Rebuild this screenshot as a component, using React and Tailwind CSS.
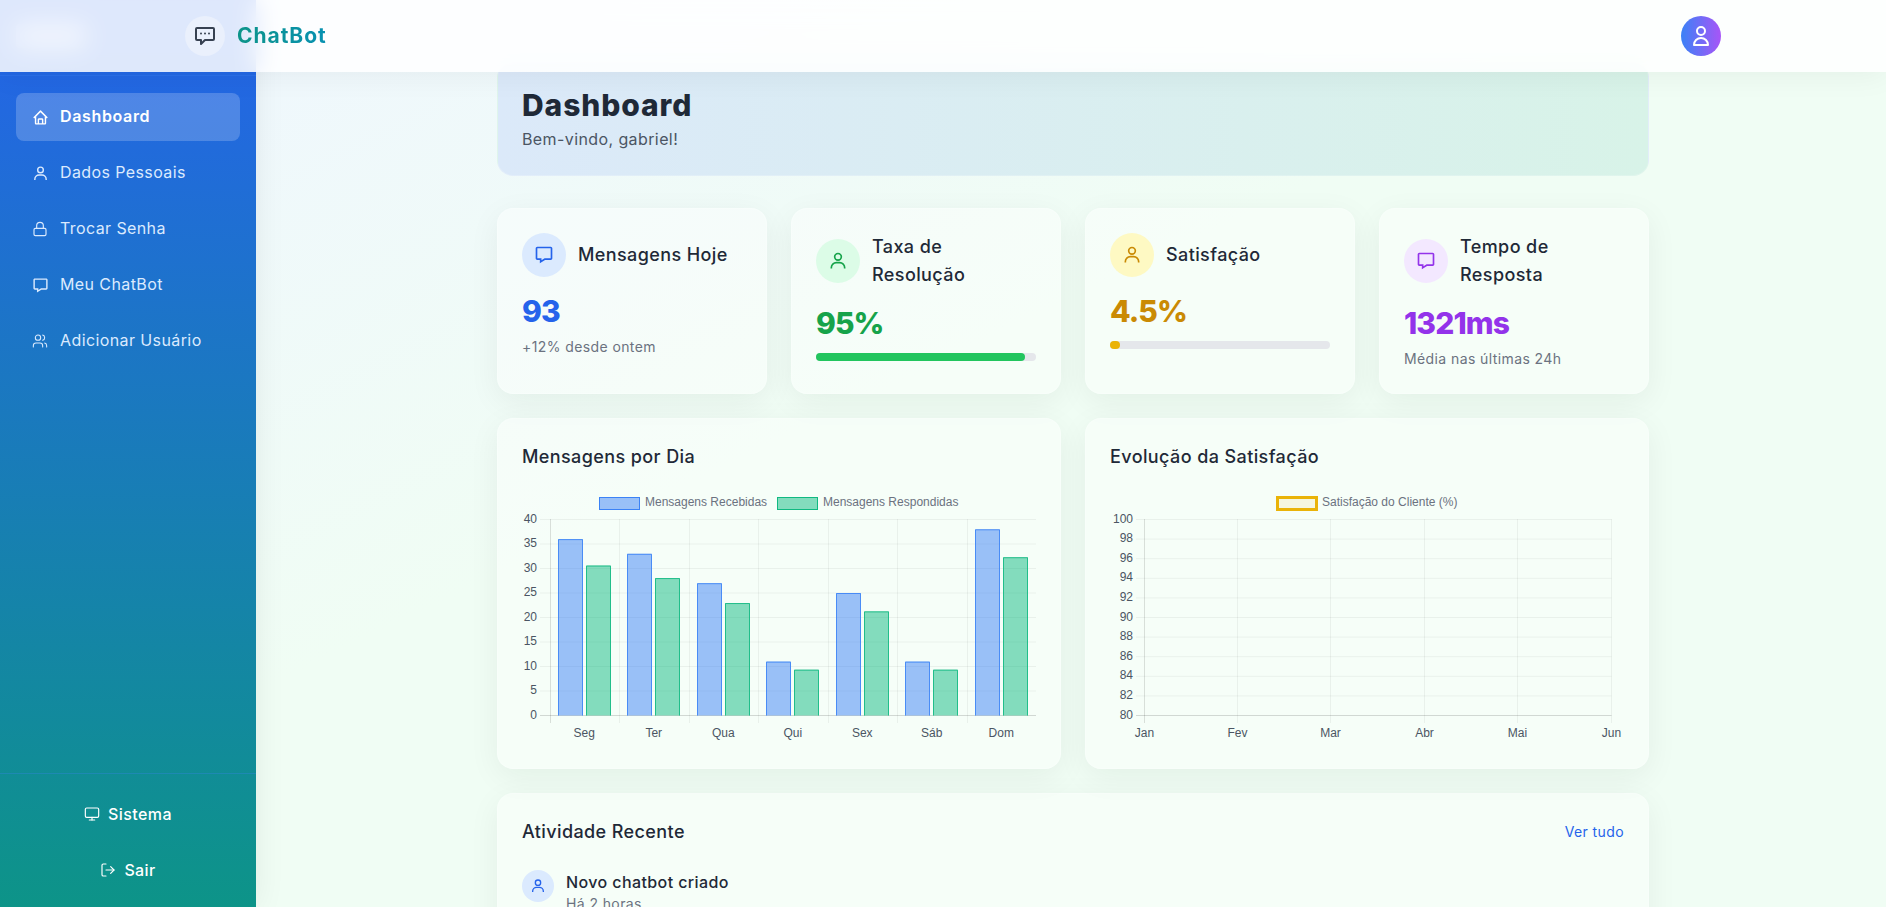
import React from 'react';
import { BiHome, BiUser, BiMessage } from 'react-icons/bi';
import { HiOutlineUser } from 'react-icons/hi';
import { Lock, Users, Monitor, LogOut } from 'lucide-react';

const LockIcon = ({ size }) => <Lock size={size - 1} strokeWidth={1.75} />;
const UsersIcon = ({ size }) => <Users size={size + 1} strokeWidth={1.6} />;

const navItems = [
  { label: 'Dashboard', icon: BiHome, active: true },
  { label: 'Dados Pessoais', icon: BiUser },
  { label: 'Trocar Senha', icon: LockIcon },
  { label: 'Meu ChatBot', icon: BiMessage },
  { label: 'Adicionar Usuário', icon: UsersIcon },
];

const days = ['Seg', 'Ter', 'Qua', 'Qui', 'Sex', 'Sáb', 'Dom'];
const received = [36, 33, 27, 11, 25, 11, 38];
const answered = [30.6, 28.05, 22.95, 9.35, 21.25, 9.35, 32.3];
const months = ['Jan', 'Fev', 'Mar', 'Abr', 'Mai', 'Jun'];

const Bar = ({ x, value, fill, stroke }) => {
  const top = 228.5 - value * 4.9;
  return (
    <g>
      <rect x={x} y={top} width={25} height={228.5 - top} fill={fill} />
      <path d={`M${x + 0.5} 228.5V${top + 0.5}H${x + 24.5}V228.5`} fill="none" stroke={stroke} strokeOpacity="0.85" />
    </g>
  );
};

const BarChart = () => {
  const left = 27.5;
  const step = 69.5;
  return (
    <svg width="514" height="257" className="block tracking-normal font-['Liberation_Sans',sans-serif]" fontSize="12" fill="#4b5563">
      <rect x="77.5" y="10.5" width="40" height="12" fill="rgba(59,130,246,0.5)" stroke="#3b82f6" />
      <text x="123" y="19" fill="#6b7280">Mensagens Recebidas</text>
      <rect x="255.5" y="10.5" width="40" height="12" fill="rgba(16,185,129,0.5)" stroke="#10b981" />
      <text x="301" y="19" fill="#6b7280">Mensagens Respondidas</text>
      {[0, 5, 10, 15, 20, 25, 30, 35, 40].map((v) => {
        const y = 228.5 - v * 4.9;
        return (
          <g key={v}>
            <line x1="18" x2="514" y1={y} y2={y} stroke={v === 0 ? 'rgba(0,0,0,0.15)' : 'rgba(0,0,0,0.05)'} />
            <text x="15" y={y + 3} textAnchor="end">{v}</text>
          </g>
        );
      })}
      {[0, 1, 2, 3, 4, 5, 6, 7].map((i) => {
        const x = Math.round(left + i * step) + 0.5;
        return <line key={i} x1={x} x2={x} y1="32" y2="236" stroke={i === 0 ? 'rgba(0,0,0,0.12)' : 'rgba(0,0,0,0.05)'} />;
      })}
      {days.map((d, i) => {
        const c = left + step * i + step / 2;
        return (
          <g key={d}>
            <Bar x={Math.round(c - 26.4)} value={received[i]} fill="rgba(59,130,246,0.5)" stroke="#3b82f6" />
            <Bar x={Math.round(c + 1.4)} value={answered[i]} fill="rgba(16,185,129,0.5)" stroke="#10b981" />
            <text x={c} y="250" textAnchor="middle">{d}</text>
          </g>
        );
      })}
    </svg>
  );
};

const LineChart = () => {
  const ticks = [80, 82, 84, 86, 88, 90, 92, 94, 96, 98, 100];
  const step = 93.4;
  const left = 33.5;
  return (
    <svg width="514" height="257" className="block tracking-normal font-['Liberation_Sans',sans-serif]" fontSize="12" fill="#4b5563">
      <rect x="167.5" y="10.5" width="39" height="12" fill="rgba(234,179,8,0.1)" stroke="#eab308" strokeWidth="3" />
      <text x="212" y="19" fill="#6b7280">Satisfação do Cliente (%)</text>
      {ticks.map((v) => {
        const y = 228.5 - (v - 80) * 9.8;
        return (
          <g key={v}>
            <line x1="26" x2="501.5" y1={y} y2={y} stroke={v === 80 ? 'rgba(0,0,0,0.15)' : 'rgba(0,0,0,0.05)'} />
            <text x="23" y={y + 3} textAnchor="end">{v}</text>
          </g>
        );
      })}
      {months.map((m, i) => {
        const x = Math.round(left + i * step) + 0.5;
        return (
          <g key={m}>
            <line x1={x} x2={x} y1="32" y2="236" stroke={i === 0 ? 'rgba(0,0,0,0.12)' : 'rgba(0,0,0,0.05)'} />
            <text x={x} y="250" textAnchor="middle">{m}</text>
          </g>
        );
      })}
    </svg>
  );
};

const StatCard = ({ title, icon: Icon, iconBg, iconColor, value, valueColor, note, bar, barColor }) => (
  <div className="bg-white/40 border border-white/20 rounded-2xl shadow-[0_8px_32px_rgba(0,40,20,0.06)] p-6">
    <div className="flex items-center mb-4">
      <div className={`w-11 h-11 rounded-full flex items-center justify-center shrink-0 ${iconBg}`}>
        <Icon size={20} className={iconColor} />
      </div>
      <h3 className="ml-3 text-lg leading-7 font-medium text-[#1f2937]">{title}</h3>
    </div>
    <p className={`text-3xl font-extrabold tracking-[-0.03em] ${valueColor}`}>{value}</p>
    {bar !== undefined && (
      <div className="w-full h-2 mt-3 bg-[#e5e7eb] rounded-full">
        <div className={`h-2 rounded-full ${barColor}`} style={{ width: bar }} />
      </div>
    )}
    <p className="mt-2 text-sm text-[#6b7280]">{note}</p>
  </div>
);

export default function App() {
  return (
    <div className="relative flex h-screen overflow-hidden bg-linear-to-br/srgb from-[#eff6ff] to-[#f0fdf4] to-45% tracking-[0.025em] font-[Inter,sans-serif]">
      {/* Sidebar */}
      <aside className="w-64 shrink-0 flex flex-col bg-linear-to-b/srgb from-[#2563eb] to-[#0d9488] shadow-[0_0_30px_rgba(0,0,0,0.07)]">
        <div className="h-[76px] shrink-0 border-b border-[#3b82f6]/30 pl-4 pt-6">
          <div className="w-[70px] h-6 rounded bg-white/60" />
        </div>
        <nav className="flex-1 px-4 pt-[17px] flex flex-col gap-2">
          {navItems.map(({ label, icon: Icon, active }) => (
            <a
              key={label}
              className={`h-12 px-4 rounded-lg flex items-center gap-3 ${active ? 'bg-white/20 text-white font-semibold tracking-[0.04em]' : 'text-[#dbeafe]'}`}
            >
              <span className="w-4 flex justify-center">
                <Icon size={17} className="shrink-0" />
              </span>
              <span className="pb-0.5">{label}</span>
            </a>
          ))}
        </nav>
        <div className="border-t border-[#3b82f6]/30 px-4 pt-4 pb-[13px] flex flex-col gap-2">
          <button className="h-12 flex items-center justify-center gap-2 text-white font-medium">
            <Monitor size={16} strokeWidth={1.75} />
            <span>Sistema</span>
          </button>
          <button className="h-12 flex items-center justify-center gap-2 text-white font-medium">
            <LogOut size={16} strokeWidth={1.75} />
            <span>Sair</span>
          </button>
        </div>
      </aside>

      {/* Main content */}
      <main className="flex-1 min-w-0 pl-[241px] pt-[62px]">
        <div className="w-[1152px]">
          <div className="rounded-2xl border border-white/20 bg-linear-to-r/srgb from-[#dbe9f9] to-[#d8f3e8] p-6 mb-8">
            <h1 className="text-3xl font-extrabold tracking-[0.03em] text-[#1f2937]">Dashboard</h1>
            <p className="mt-1 text-[#4b5563]">Bem-vindo, gabriel!</p>
          </div>

          <div className="grid grid-cols-4 gap-6 mb-6">
            <StatCard title="Mensagens Hoje" icon={BiMessage} iconBg="bg-[#dbeafe]" iconColor="text-[#2563eb]" value="93" valueColor="text-[#2563eb]" note="+12% desde ontem" />
            <StatCard title="Taxa de Resolução" icon={BiUser} iconBg="bg-[#dcfce7]" iconColor="text-[#16a34a]" value="95%" valueColor="text-[#16a34a]" bar="95%" barColor="bg-[#22c55e]" />
            <StatCard title="Satisfação" icon={BiUser} iconBg="bg-[#fef9c3]" iconColor="text-[#ca8a04]" value="4.5%" valueColor="text-[#ca8a04]" bar="4.5%" barColor="bg-[#eab308]" />
            <StatCard title="Tempo de Resposta" icon={BiMessage} iconBg="bg-[#f3e8ff]" iconColor="text-[#9333ea]" value="1321ms" valueColor="text-[#9333ea]" note="Média nas últimas 24h" />
          </div>

          <div className="grid grid-cols-2 gap-6 mb-6">
            <div className="bg-white/40 border border-white/20 rounded-2xl shadow-[0_8px_32px_rgba(0,40,20,0.06)] p-6">
              <h3 className="text-lg leading-7 font-medium text-[#1f2937] mb-4">Mensagens por Dia</h3>
              <BarChart />
            </div>
            <div className="bg-white/40 border border-white/20 rounded-2xl shadow-[0_8px_32px_rgba(0,40,20,0.06)] p-6">
              <h3 className="text-lg leading-7 font-medium text-[#1f2937] mb-4">Evolução da Satisfação</h3>
              <LineChart />
            </div>
          </div>

          <div className="bg-white/40 border border-white/20 rounded-2xl shadow-[0_8px_32px_rgba(0,40,20,0.06)] p-6">
            <div className="flex items-center justify-between mb-6">
              <h3 className="text-lg leading-7 font-medium text-[#1f2937]">Atividade Recente</h3>
              <a className="text-sm text-[#2563eb]">Ver tudo</a>
            </div>
            <div className="flex items-start gap-3">
              <div className="w-8 h-8 rounded-full bg-[#dbeafe] flex items-center justify-center shrink-0">
                <BiUser size={16} className="text-[#2563eb]" />
              </div>
              <div>
                <p className="font-medium text-[#1f2937] pb-0.5 -mb-0.5">Novo chatbot criado</p>
                <p className="text-sm text-[#6b7280]">Há 2 horas</p>
              </div>
            </div>
          </div>
        </div>
      </main>

      {/* Top bar, sits over sidebar and content */}
      <header className="absolute top-0 inset-x-0 h-[72px] bg-white/85 backdrop-blur-md shadow-[0_4px_30px_rgba(0,0,0,0.05)] flex items-center justify-between pl-[185px] pr-[165px]">
        <div className="flex items-center gap-3">
          <div className="w-10 h-10 rounded-full bg-[#eaf0fc] flex items-center justify-center">
            <svg width="24" height="24" viewBox="0 0 24 24" fill="none" stroke="#374151" strokeWidth="2" strokeLinejoin="round">
              <path d="M4 4h16a1 1 0 0 1 1 1v10a1 1 0 0 1-1 1h-8l-4 4v-4H4a1 1 0 0 1-1-1V5a1 1 0 0 1 1-1z" />
              <g fill="#374151" stroke="none">
                <circle cx="8" cy="9.5" r="1" />
                <circle cx="12" cy="9.5" r="1" />
                <circle cx="16" cy="9.5" r="1" />
              </g>
            </svg>
          </div>
          <span className="text-[21px] font-bold tracking-[0.045em] bg-linear-to-r/srgb from-[#0d9488] to-[#0891b2] bg-clip-text text-transparent">ChatBot</span>
        </div>
        <div className="w-10 h-10 rounded-full bg-linear-to-r/srgb from-[#3b82f6] to-[#a855f7] flex items-center justify-center text-white">
          <HiOutlineUser size={24} />
        </div>
      </header>
    </div>
  );
}
